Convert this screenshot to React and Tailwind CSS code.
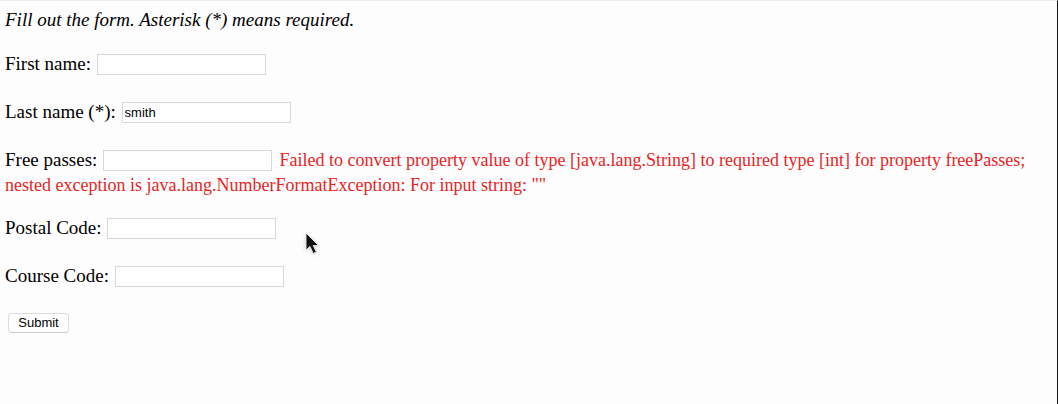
const inputClass =
  "mt-px mb-1 ml-px mr-[3px] h-[21px] w-[169px] border border-[#d5d8da] bg-white px-[2px] align-middle font-[Liberation_Sans,sans-serif] text-[13px] leading-4 text-black outline-none";

function Field({ id, label, value, error }) {
  return (
    <div className="mb-[22px]">
      <label htmlFor={id}>{label}</label>{" "}
      <input id={id} name={id} type="text" defaultValue={value} className={inputClass} />
      {error && <span className="text-[18px] text-[#e8241f]"> {error}</span>}
    </div>
  );
}

function Cursor() {
  return (
    <svg className="pointer-events-none absolute left-[303px] top-[230px] drop-shadow-sm" width="18" height="26" viewBox="0 0 18 26" aria-hidden="true">
      <path d="M3 2v17l4-3.5 3.2 7 3.2-1.5-3.2-6.5h5.3z" fill="#111" stroke="#ddd" strokeWidth="1" />
    </svg>
  );
}

export default function App() {
  return (
    <main className="relative min-h-screen border-r border-t border-r-[#111] border-t-[#f0f0f3] bg-[#fefdfe] pl-[5px] pt-[9px] font-[Liberation_Serif,serif] text-[19px] leading-5 text-black">
      <form onSubmit={(e) => e.preventDefault()}>
        <p className="mb-[23px] italic">Fill out the form. Asterisk (*) means required.</p>
        <Field id="firstName" label="First name:" />
        <Field id="lastName" label="Last name (*):" value="smith" />
        <Field
          id="freePasses"
          label="Free passes:"
          error={'Failed to convert property value of type [java.lang.String] to required type [int] for property freePasses; nested exception is java.lang.NumberFormatException: For input string: ""'}
        />
        <Field id="postalCode" label="Postal Code:" />
        <Field id="courseCode" label="Course Code:" />
        <button type="submit" className="ml-[3px] block h-5 w-[61px] rounded border border-[#dcdcde] border-b-[#c8c8ca] bg-white font-[Liberation_Sans,sans-serif] text-[13px] leading-4">
          Submit
        </button>
      </form>
      <Cursor />
    </main>
  );
}
